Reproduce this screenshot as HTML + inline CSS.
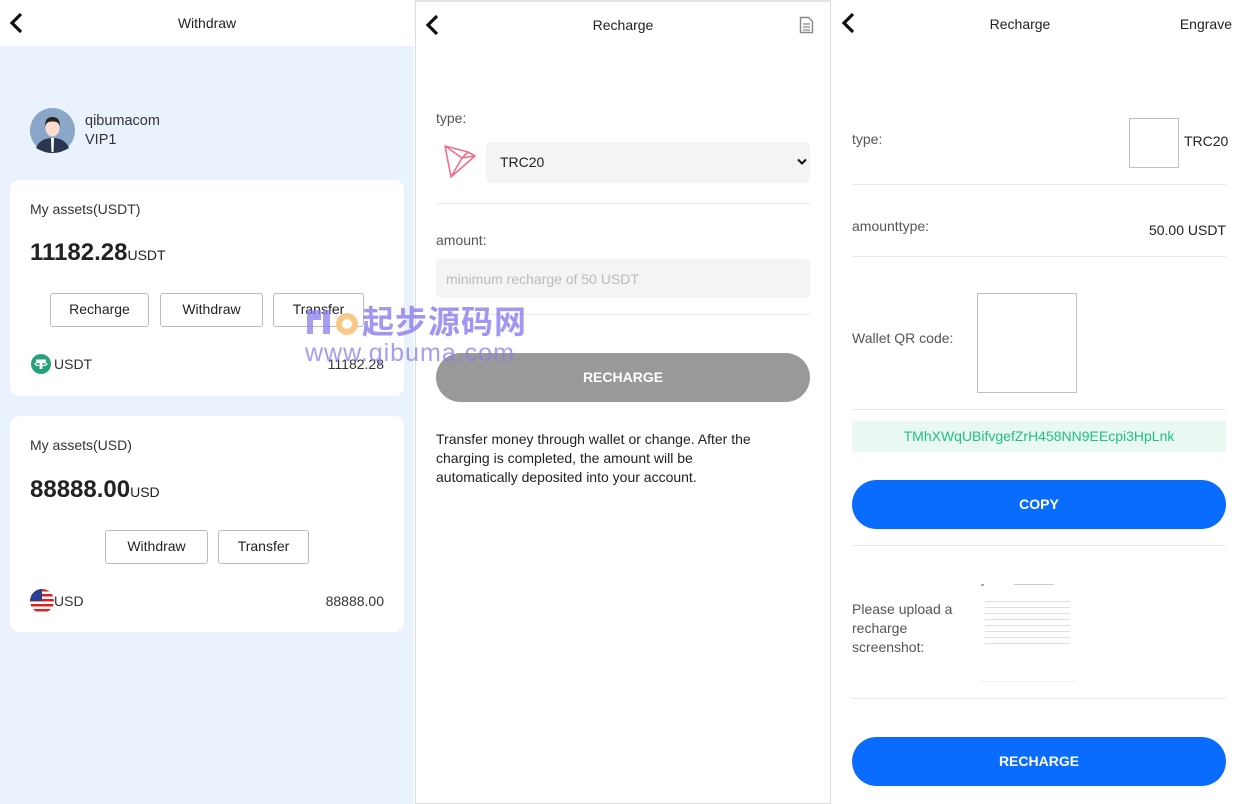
<!DOCTYPE html>
<html><head><meta charset="utf-8">
<style>
*{box-sizing:border-box;margin:0;padding:0}
body{width:1248px;height:804px;position:relative;overflow:hidden;background:#fff;font-family:"Liberation Sans","Noto Sans CJK SC",sans-serif;font-size:14px;color:#333}
.a{position:absolute;white-space:nowrap}
.btn{position:absolute;border:1px solid #bbb;border-radius:3px;background:#fff;text-align:center;line-height:31px;font-size:14px;color:#222}
.card{position:absolute;left:10px;width:394px;background:#fff;border-radius:10px}
.line{position:absolute;height:1px;background:#e8e8e8}
.big{position:absolute;border-radius:25px;color:#fff;font-weight:bold;text-align:center;line-height:49px;font-size:14px}
.broken{position:absolute;border:1px solid #c0c0c0}
</style></head><body>
<div class="a" style="left:0;top:0;width:414px;height:804px;background:#eaf2fe"></div>
<div class="a" style="left:0;top:0;width:414px;height:46px;background:#fff"></div>
<svg class="a" style="left:8px;top:12px" width="16" height="22" viewBox="0 0 16 22"><path d="M13 2 L4 11 L13 20" fill="none" stroke="#111" stroke-width="3.2"/></svg>
<div class="a" style="left:0;width:414px;top:15px;text-align:center;color:#222">Withdraw</div>
<svg class="a" style="left:30px;top:108px" width="45" height="45" viewBox="0 0 45 45"><circle cx="22.5" cy="22.5" r="22.5" fill="#8aa6c8"/><path d="M6 40 Q10 30 22.5 30 Q35 30 39 40 Q31 45 22.5 45 Q14 45 6 40Z" fill="#2a3550"/><path d="M21 30 L24 30 L23.5 44 L21.5 44Z" fill="#fff"/><ellipse cx="22.5" cy="20" rx="7" ry="8.5" fill="#f9dccb"/><path d="M15 18 Q15 9 22.5 9 Q30 9 30 18 Q28 13 22.5 13.5 Q17 13 15 18Z" fill="#2b2420"/></svg>
<div class="a" style="left:85px;top:113px;font-size:14.5px">qibumacom</div>
<div class="a" style="left:85px;top:132px;font-size:14.5px">VIP1</div>
<div class="card" style="top:180px;height:216px"></div>
<div class="a" style="left:30px;top:201px">My assets(USDT)</div>
<div class="a" style="left:30px;top:239px;font-size:24px;font-weight:bold;color:#222">11182.28<span style="font-size:14px;font-weight:normal">USDT</span></div>
<div class="btn" style="left:50px;top:293px;width:99px;height:34px">Recharge</div>
<div class="btn" style="left:160px;top:293px;width:103px;height:34px">Withdraw</div>
<div class="btn" style="left:273px;top:293px;width:91px;height:34px">Transfer</div>
<svg class="a" style="left:31px;top:354px" width="20" height="20" viewBox="0 0 20 20"><circle cx="10" cy="10" r="10" fill="#26a17b"/><path d="M5 5.5h10v2.5h-3.6v7h-2.8v-7H5z" fill="#fff"/><ellipse cx="10" cy="10" rx="6" ry="1.6" fill="none" stroke="#fff" stroke-width="1.1"/></svg>
<div class="a" style="left:54px;top:356px">USDT</div>
<div class="a" style="right:864px;top:356px">11182.28</div>
<div class="card" style="top:416px;height:216px"></div>
<div class="a" style="left:30px;top:437px">My assets(USD)</div>
<div class="a" style="left:30px;top:476px;font-size:24px;font-weight:bold;color:#222">88888.00<span style="font-size:14px;font-weight:normal">USD</span></div>
<div class="btn" style="left:105px;top:530px;width:103px;height:34px">Withdraw</div>
<div class="btn" style="left:218px;top:530px;width:91px;height:34px">Transfer</div>
<svg class="a" style="left:30px;top:589px" width="24" height="24" viewBox="0 0 24 24"><defs><clipPath id="c"><circle cx="12" cy="12" r="12"/></clipPath></defs><g clip-path="url(#c)"><rect width="24" height="24" fill="#fff"/><g fill="#d22"><rect y="0" width="24" height="2.5"/><rect y="5" width="24" height="2.5"/><rect y="10" width="24" height="2.5"/><rect y="15" width="24" height="2.5"/><rect y="20" width="24" height="2.5"/></g><rect width="12" height="12" fill="#2a3f8f"/></g></svg>
<div class="a" style="left:54px;top:593px">USD</div>
<div class="a" style="right:864px;top:593px">88888.00</div>

<div class="a" style="left:415px;top:0;width:416px;height:804px;border:1px solid #ddd;border-top:2px solid #e4e4e4;background:#fff"></div>
<svg class="a" style="left:424px;top:14px" width="16" height="22" viewBox="0 0 16 22"><path d="M13 2 L4 11 L13 20" fill="none" stroke="#111" stroke-width="3.2"/></svg>
<div class="a" style="left:415px;width:416px;top:17px;text-align:center;color:#222">Recharge</div>
<svg class="a" style="left:799px;top:16px" width="15" height="18" viewBox="0 0 15 18"><path d="M1.5 1.5h8l4 4v11h-12z" fill="none" stroke="#888" stroke-width="1.4"/><path d="M4 8h7M4 11h7M4 14h7" stroke="#888" stroke-width="1.3"/></svg>
<div class="a" style="left:436px;top:110px;color:#555">type:</div>
<svg class="a" style="left:436px;top:140px" width="50" height="45" viewBox="0 0 50 45"><path d="M9 6 L32 12 L39 16 L15 37 Z M9 6 L26 18 L39 16 M26 18 L15 37 M32 12 L26 18" fill="none" stroke="#ef6f88" stroke-width="1.6" stroke-linejoin="round"/></svg>
<div class="a" style="left:486px;top:142px;width:324px;height:41px;background:#f4f4f4;border-radius:5px"></div>
<div class="a" style="left:500px;top:154px;color:#222">TRC20</div>
<svg class="a" style="left:797px;top:158px" width="10" height="8" viewBox="0 0 10 8"><path d="M1 1.5 L5 5.5 L9 1.5" fill="none" stroke="#111" stroke-width="2"/></svg>
<div class="line" style="left:436px;top:203px;width:374px"></div>
<div class="a" style="left:436px;top:232px;color:#555">amount:</div>
<div class="a" style="left:436px;top:259px;width:374px;height:39px;background:#f4f4f4;border-radius:5px"></div>
<div class="a" style="left:446px;top:271px;color:#bbb">minimum recharge of 50 USDT</div>
<div class="line" style="left:436px;top:314px;width:374px"></div>
<div class="big" style="left:436px;top:353px;width:374px;height:49px;background:#999">RECHARGE</div>
<div class="a" style="left:436px;top:430px;line-height:19px;white-space:normal;width:338px;color:#222">Transfer money through wallet or change. After the charging is completed, the amount will be automatically deposited into your account.</div>

<svg class="a" style="left:840px;top:12px" width="16" height="22" viewBox="0 0 16 22"><path d="M13 2 L4 11 L13 20" fill="none" stroke="#111" stroke-width="3.2"/></svg>
<div class="a" style="left:832px;width:376px;top:16px;text-align:center;color:#222">Recharge</div>
<div class="a" style="right:16px;top:16px;color:#222">Engrave</div>
<div class="a" style="left:852px;top:131px;color:#555">type:</div>
<div class="broken" style="left:1129px;top:118px;width:50px;height:50px"></div>
<div class="a" style="left:1184px;top:133px;color:#222">TRC20</div>
<div class="line" style="left:852px;top:184px;width:374px"></div>
<div class="a" style="left:852px;top:218px;color:#555">amounttype:</div>
<div class="a" style="right:22px;top:222px;color:#222">50.00 USDT</div>
<div class="line" style="left:852px;top:256px;width:374px"></div>
<div class="a" style="left:852px;top:330px;color:#555">Wallet QR code:</div>
<div class="broken" style="left:977px;top:293px;width:100px;height:100px"></div>
<div class="line" style="left:852px;top:409px;width:374px"></div>
<div class="a" style="left:852px;top:421px;width:374px;height:31px;background:#e9f8f1;color:#1fbf88;text-align:center;line-height:31px">TMhXWqUBifvgefZrH458NN9EEcpi3HpLnk</div>
<div class="big" style="left:852px;top:480px;width:374px;height:49px;background:#0a6cff">COPY</div>
<div class="line" style="left:852px;top:545px;width:374px"></div>
<div class="a" style="left:852px;top:600px;line-height:19px;color:#555">Please upload a<br>recharge<br>screenshot:</div>
<div class="a" style="left:979px;top:582px;width:98px;height:100px;border-bottom:1px solid #f0f0f0"><div style="position:absolute;left:2px;top:2px;width:3px;height:2px;background:#aaa"></div><div style="position:absolute;left:35px;top:2px;width:40px;height:1px;background:#ccc"></div><div style="position:absolute;left:6px;top:14px;width:85px;height:50px;background:repeating-linear-gradient(#fff 0 5px,#ddd 5px 6px)"></div></div>
<div class="line" style="left:852px;top:698px;width:374px"></div>
<div class="big" style="left:852px;top:737px;width:374px;height:49px;background:#0a6cff">RECHARGE</div>

<svg class="a" style="left:304px;top:306px" width="58" height="32" viewBox="0 0 58 32"><path d="M3 4h14v10H9v14H3z" fill="#8a7df0" opacity=".75"/><rect x="19" y="4" width="7" height="24" fill="#8a7df0" opacity=".75"/><circle cx="43" cy="18" r="11" fill="#f8c27a" opacity=".9"/><circle cx="43" cy="18" r="5" fill="#fff"/></svg>
<div class="a" style="left:362px;top:302px;font-size:32px;font-weight:bold;color:#8a7df0;opacity:.8;letter-spacing:1px;line-height:40px">起步源码网</div>
<div class="a" style="left:305px;top:338px;font-size:25px;color:#8a7df0;opacity:.75;letter-spacing:1px;line-height:30px">www.qibuma.com</div>
</body></html>
